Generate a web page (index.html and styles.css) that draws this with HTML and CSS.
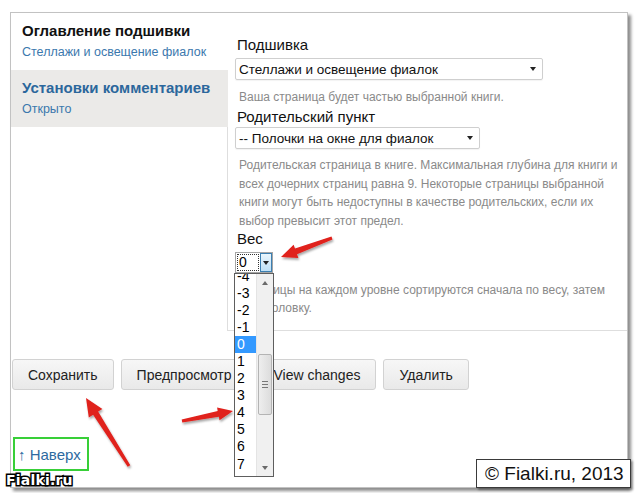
FILE: index.html
```html
<!DOCTYPE html>
<html lang="ru">
<head>
<meta charset="utf-8">
<title>Подшивка</title>
<link rel="stylesheet" href="styles.css">
</head>
<body>
<div class="frame">
  <div class="top">
    <div class="tabs">
      <div class="tab active">
        <div class="tab-title">Оглавление подшивки</div>
        <div class="tab-sub">Стеллажи и освещение фиалок</div>
      </div>
      <div class="tab">
        <div class="tab-title link">Установки комментариев</div>
        <div class="tab-sub">Открыто</div>
      </div>
    </div>
    <div class="pane">
      <div class="label">Подшивка</div>
      <div class="select s1"><span>Стеллажи и освещение фиалок</span><i class="caret"></i></div>
      <div class="help h1">Ваша страница будет частью выбранной книги.</div>
      <div class="label l2">Родительский пункт</div>
      <div class="select s2"><span>-- Полочки на окне для фиалок</span><i class="caret"></i></div>
      <div class="help h2">Родительская страница в книге. Максимальная глубина для книги и всех дочерних страниц равна 9. Некоторые страницы выбранной книги могут быть недоступны в качестве родительских, если их выбор превысит этот предел.</div>
      <div class="label">Вес</div>
      <div class="weight">
        <div class="wsel"><span class="wval">0</span><span class="wbtn"><i class="caret"></i></span></div>
        <div class="dropdown">
          <div class="items">
            <div class="item">-4</div>
            <div class="item">-3</div>
            <div class="item">-2</div>
            <div class="item">-1</div>
            <div class="item sel">0</div>
            <div class="item">1</div>
            <div class="item">2</div>
            <div class="item">3</div>
            <div class="item">4</div>
            <div class="item">5</div>
            <div class="item">6</div>
            <div class="item">7</div>
            <div class="item">8</div>
          </div>
          <div class="sb">
            <div class="sb-btn"><i class="tri up"></i></div>
            <div class="sb-track"><div class="thumb"><i></i><i></i><i></i></div></div>
            <div class="sb-btn"><i class="tri down"></i></div>
          </div>
        </div>
      </div>
      <div class="help h3">Страницы на каждом уровне сортируются сначала по весу, затем по заголовку.</div>
    </div>
  </div>
  <div class="actions">
    <button class="btn">Сохранить</button>
    <button class="btn wide">Предпросмотр</button>
    <button class="btn">View changes</button>
    <button class="btn">Удалить</button>
  </div>
  <div class="totop"><a href="#">↑ Наверх</a></div>
</div>
<div class="copyright">© Fialki.ru, 2013</div>
<div class="watermark">Fialki.ru</div>
<svg class="arrows" width="640" height="493" viewBox="0 0 640 493">
  <defs>
    <filter id="sh" x="-20%" y="-20%" width="140%" height="140%">
      <feDropShadow dx="1" dy="2" stdDeviation="1.2" flood-color="#000" flood-opacity="0.35"/>
    </filter>
  </defs>
  <g fill="#e0201c" filter="url(#sh)">
    <polygon points="331.5,236.6 295,248.6 293.6,244.8 281,257 298.4,258 297,254.2 332.5,239.4"/>
    <polygon points="130.3,465.2 98.1,411.6 102.4,408.9 86,398 88.8,417.5 93.1,414.8 127.7,466.8"/>
    <polygon points="182.3,422.5 218.9,416.8 219.5,420.3 233,411 217.1,407.5 217.7,411 181.7,419.5"/>
  </g>
</svg>
</body>
</html>
```
FILE: styles.css
```css
html, body {
  margin: 0;
  padding: 0;
}
body {
  background: #fff;
  font-family: "Liberation Sans", Arial, sans-serif;
  color: #222;
  width: 640px;
  height: 493px;
  overflow: hidden;
  position: relative;
}
.frame {
  box-sizing: border-box;
  position: relative;
  top: 12px;
  left: 10px;
  width: 618px;
  height: 476px;
  border: 1px solid #c2c2c2;
  box-shadow: 3px 3px 3px rgba(0, 0, 0, 0.45);
  background: #fff;
}
.top {
  display: flex;
}
.tabs {
  width: 217px;
  flex: none;
  margin-right: -1px;
  position: relative;
  z-index: 1;
}
.tab {
  box-sizing: border-box;
  height: 57px;
  padding: 9px 11px 0 11px;
  background: #ebeae8;
}
.tab.active {
  background: #fff;
}
.tab-title {
  font-size: 15px;
  font-weight: bold;
  line-height: 18px;
  color: #111;
}
.tab-title.link {
  color: #2b679c;
}
.tab-sub {
  margin-top: 3px;
  font-size: 12.5px;
  line-height: 18px;
  color: #3b78ad;
}
.pane {
  flex: 1;
  border-left: 1px solid #dedede;
  border-bottom: 1px solid #dedede;
  padding: 23px 0 13px 7px;
}
.label {
  font-size: 15px;
  line-height: 18px;
  padding-left: 2px;
  margin-bottom: 4px;
  color: #111;
}
.label.l2 {
  margin-top: 2px;
  margin-bottom: 1px;
}
.select {
  box-sizing: border-box;
  height: 22px;
  border: 1px solid #cfcfcf;
  border-radius: 2px;
  display: flex;
  align-items: center;
  justify-content: space-between;
  padding: 0 6px 0 3px;
  font-size: 13.5px;
  color: #111;
  box-shadow: 0 1px 1px rgba(0, 0, 0, 0.05);
}
.s1 { width: 308px; }
.s2 { width: 245px; }
.caret {
  display: block;
  width: 0;
  height: 0;
  border-left: 3px solid transparent;
  border-right: 3px solid transparent;
  border-top: 4px solid #222;
}
.help {
  font-size: 12px;
  line-height: 18px;
  color: #8a8a8a;
  padding-left: 4px;
  width: 380px;
}
.h1 { margin-top: 8px; }
.h2 { margin-top: 7px; line-height: 18.5px; }
.h3 { margin-top: 8px; }
.weight {
  position: relative;
  z-index: 5;
  width: 38px;
}
.wsel {
  box-sizing: border-box;
  width: 38px;
  height: 21px;
  border: 1px solid #a5a5a5;
  display: flex;
  background: #fff;
}
.wval {
  flex: 1;
  margin: 1px;
  border: 1px dotted #333;
  font-size: 14px;
  line-height: 15px;
  padding-left: 1px;
  color: #000;
}
.wbtn {
  width: 12px;
  box-sizing: border-box;
  border: 1px solid #3c7fb1;
  background: linear-gradient(#eaf6fd, #bfe0f5);
  display: flex;
  align-items: center;
  justify-content: center;
}
.dropdown {
  position: absolute;
  left: -1px;
  top: 100%;
  box-sizing: border-box;
  width: 40px;
  height: 204px;
  border: 1px solid #5e5e5e;
  background: #fff;
  overflow: hidden;
  display: flex;
}
.items {
  flex: 1;
  margin-top: -6.5px;
}
.item {
  height: 17.1px;
  line-height: 17px;
  font-size: 14px;
  padding-left: 2px;
  color: #000;
}
.item.sel {
  background: #3399ff;
  color: #fff;
}
.sb {
  width: 16px;
  flex: none;
  background: #f0f0f0;
  border-left: 1px solid #e4e4e4;
  display: flex;
  flex-direction: column;
}
.sb-btn {
  height: 17px;
  display: flex;
  align-items: center;
  justify-content: center;
}
.sb-track {
  flex: 1;
}
.thumb {
  box-sizing: border-box;
  margin: 63px 1px 0 1px;
  height: 61px;
  border: 1px solid #b4b4b4;
  border-radius: 2px;
  background: linear-gradient(90deg, #eeeeee, #dcdcdc);
  display: flex;
  flex-direction: column;
  align-items: center;
  justify-content: center;
  gap: 2px;
}
.thumb i {
  display: block;
  width: 6px;
  height: 1px;
  background: #777;
}
.tri {
  display: block;
  width: 0;
  height: 0;
  border-left: 3.5px solid transparent;
  border-right: 3.5px solid transparent;
}
.tri.up { border-bottom: 4px solid #6a6a6a; }
.tri.down { border-top: 4px solid #6a6a6a; }
.actions {
  display: flex;
  gap: 7px;
  margin-top: 28px;
  padding-left: 1px;
}
.btn {
  box-sizing: border-box;
  height: 31px;
  padding: 0 15px;
  border: 1px solid #d2d2d2;
  border-radius: 3px;
  background: linear-gradient(#f7f7f7, #e9e9e9);
  font-family: "Liberation Sans", Arial, sans-serif;
  font-size: 14px;
  color: #222;
}
.btn.wide {
  padding-right: 18px;
}
.totop {
  box-sizing: border-box;
  margin: 47px 0 0 2px;
  width: 76px;
  height: 34px;
  border: 2px solid #38cf38;
  padding-left: 3px;
  display: flex;
  align-items: center;
}
.totop a {
  font-size: 15px;
  color: #2d6aa0;
  text-decoration: none;
}
.copyright {
  position: absolute;
  left: 476px;
  top: 459px;
  padding: 3px 6px 3px 8px;
  font-size: 19px;
  line-height: 21px;
  color: #111;
  background: #fff;
  border: 1px solid #3a3a3a;
  box-shadow: 2px 2px 2px rgba(0, 0, 0, 0.35);
}
.watermark {
  position: absolute;
  left: 6px;
  top: 472px;
  font-family: "DejaVu Sans", sans-serif;
  font-weight: bold;
  font-size: 14px;
  letter-spacing: 0.2px;
  color: #fff;
  -webkit-text-stroke: 3px #000;
  paint-order: stroke fill;
}
.arrows {
  position: absolute;
  left: 0;
  top: 0;
  pointer-events: none;
  z-index: 20;
}
```
